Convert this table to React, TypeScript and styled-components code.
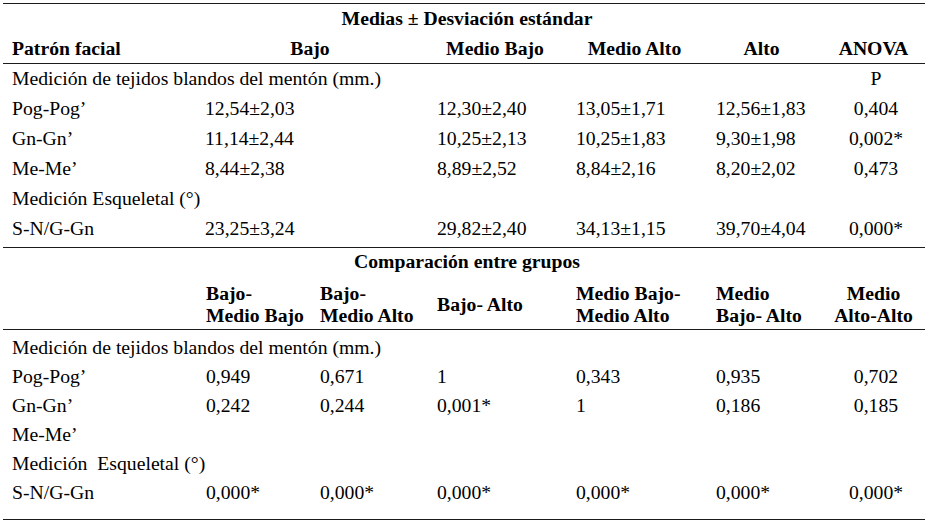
import { FC, ReactNode } from 'react';
import styled, { createGlobalStyle } from 'styled-components';

const GlobalStyle = createGlobalStyle`
    html, body {
        margin: 0;
        padding: 0;
        background: #ffffff;
        overflow: hidden;
    }
`;

const COLUMNS = '194px 114px 117px 139px 140px 114px 110px';

const Page = styled.div`
    margin: 3px 0 0 3px;
    width: 928px;
    font-family: 'Liberation Serif', 'Times New Roman', serif;
    font-size: 19.7px;
    color: #000;
`;

const Panel = styled.section<{ $last?: boolean }>`
    border-top: 1px solid #1c1c1c;
    border-bottom: ${(p) => (p.$last ? '1px solid #1c1c1c' : 'none')};
`;

const Caption = styled.div<{ $h: number }>`
    height: ${(p) => p.$h}px;
    line-height: ${(p) => p.$h}px;
    text-align: center;
    font-weight: 700;
    white-space: nowrap;
`;

const HeadRow = styled.div<{ $pad: string; $lh: number }>`
    display: grid;
    grid-template-columns: ${COLUMNS};
    align-items: center;
    padding: ${(p) => p.$pad};
    line-height: ${(p) => p.$lh}px;
    font-weight: 700;
    border-bottom: 1px solid #1c1c1c;
`;

const Body = styled.div<{ $pad: string }>`
    padding: ${(p) => p.$pad};
`;

// $lh a bit smaller than $h lifts the text inside the row
const Row = styled.div<{ $h: number; $lh?: number }>`
    display: grid;
    grid-template-columns: ${COLUMNS};
    height: ${(p) => p.$h}px;
    line-height: ${(p) => p.$lh ?? p.$h}px;
`;

const Cell = styled.div<{ $span?: number; $center?: boolean; $shift?: number }>`
    grid-column: span ${(p) => p.$span ?? 1};
    padding: 0 ${(p) => (p.$center ? 0 : 9)}px 0 ${(p) => (p.$center ? 0 : 9 + (p.$shift ?? 0))}px;
    text-align: ${(p) => (p.$center ? 'center' : 'left')};
    white-space: pre;
`;

const HeadCell = styled(Cell)`
    padding-right: ${(p) => (p.$center ? 5 : 9)}px;
`;

type DataRow = { label: string; values: string[]; last?: string };

const meansRows: (DataRow | string)[] = [
    'Medición de tejidos blandos del mentón (mm.)',
    { label: 'Pog-Pog’', values: ['12,54±2,03', '12,30±2,40', '13,05±1,71', '12,56±1,83'], last: '0,404' },
    { label: 'Gn-Gn’', values: ['11,14±2,44', '10,25±2,13', '10,25±1,83', '9,30±1,98'], last: '0,002*' },
    { label: 'Me-Me’', values: ['8,44±2,38', '8,89±2,52', '8,84±2,16', '8,20±2,02'], last: '0,473' },
    'Medición Esqueletal (°)',
    { label: 'S-N/G-Gn', values: ['23,25±3,24', '29,82±2,40', '34,13±1,15', '39,70±4,04'], last: '0,000*' },
];

const compareRows: (DataRow | string)[] = [
    'Medición de tejidos blandos del mentón (mm.)',
    { label: 'Pog-Pog’', values: ['0,949', '0,671', '1', '0,343', '0,935'], last: '0,702' },
    { label: 'Gn-Gn’', values: ['0,242', '0,244', '0,001*', '1', '0,186'], last: '0,185' },
    { label: 'Me-Me’', values: ['', '', '', '', ''], last: '' },
    'Medición\u00a0 Esqueletal (°)',
    { label: 'S-N/G-Gn', values: ['0,000*', '0,000*', '0,000*', '0,000*', '0,000*'], last: '0,000*' },
];

const twoLine = (a: string, b: string): ReactNode => (
    <>
        {a}
        <br />
        {b}
    </>
);

const MeansTable: FC = () => (
    <Panel>
        <Caption $h={29}>Medias ± Desviación estándar</Caption>
        <HeadRow $pad="0" $lh={30}>
            <HeadCell>Patrón facial</HeadCell>
            <HeadCell $span={2} $center>Bajo</HeadCell>
            <HeadCell $center>Medio Bajo</HeadCell>
            <HeadCell $center>Medio Alto</HeadCell>
            <HeadCell $center>Alto</HeadCell>
            <HeadCell $center>ANOVA</HeadCell>
        </HeadRow>
        <Body $pad="0 0 3px">
            {meansRows.map((row, i) =>
                typeof row === 'string' ? (
                    <Row key={i} $h={30} $lh={28}>
                        <Cell $span={6}>{row}</Cell>
                        <Cell $center>{i === 0 ? 'P' : ''}</Cell>
                    </Row>
                ) : (
                    <Row key={i} $h={30} $lh={28}>
                        <Cell>{row.label}</Cell>
                        <Cell $span={2} $shift={-1}>{row.values[0]}</Cell>
                        <Cell>{row.values[1]}</Cell>
                        <Cell>{row.values[2]}</Cell>
                        <Cell>{row.values[3]}</Cell>
                        <Cell $center>{row.last}</Cell>
                    </Row>
                ),
            )}
        </Body>
    </Panel>
);

const CompareTable: FC = () => (
    <Panel $last>
        <Caption $h={26}>Comparación entre grupos</Caption>
        <HeadRow $pad="8px 0 3px" $lh={22}>
            <HeadCell />
            <HeadCell>{twoLine('Bajo-', 'Medio Bajo')}</HeadCell>
            <HeadCell>{twoLine('Bajo-', 'Medio Alto')}</HeadCell>
            <HeadCell>Bajo- Alto</HeadCell>
            <HeadCell>{twoLine('Medio Bajo-', 'Medio Alto')}</HeadCell>
            <HeadCell>{twoLine('Medio', 'Bajo- Alto')}</HeadCell>
            <HeadCell $center>{twoLine('Medio', 'Alto-Alto')}</HeadCell>
        </HeadRow>
        <Body $pad="3px 0 12px">
            {compareRows.map((row, i) =>
                typeof row === 'string' ? (
                    <Row key={i} $h={29}>
                        <Cell $span={7}>{row}</Cell>
                    </Row>
                ) : (
                    <Row key={i} $h={29}>
                        <Cell>{row.label}</Cell>
                        {row.values.map((v, j) => (
                            <Cell key={j}>{v}</Cell>
                        ))}
                        <Cell $center>{row.last}</Cell>
                    </Row>
                ),
            )}
        </Body>
    </Panel>
);

const App: FC = () => (
    <>
        <GlobalStyle />
        <Page>
            <MeansTable />
            <CompareTable />
        </Page>
    </>
);

export default App;
